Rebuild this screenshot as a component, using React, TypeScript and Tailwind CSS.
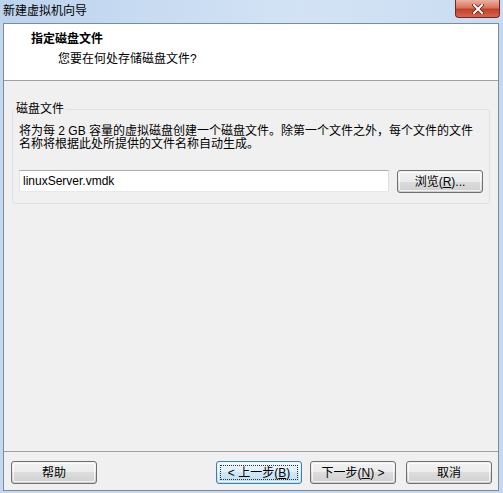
import React from 'react';

const ui = '"Liberation Sans", "Noto Sans CJK SC", sans-serif';

function WinButton({
  children,
  isDefault,
  className = '',
}: {
  children: React.ReactNode;
  isDefault?: boolean;
  className?: string;
}) {
  return (
    <button
      className={
        'relative h-[23px] w-[86px] rounded-[3px] border text-[12px] leading-[14px] text-black ' +
        (isDefault
          ? 'border-[#3c7fb1] bg-[linear-gradient(#eaf6fd_0%,#e0f1fb_50%,#cfe8f7_50%,#bddff3_100%)] '
          : 'border-[#707070] bg-[linear-gradient(#f2f2f2_0%,#ebebeb_50%,#dddddd_50%,#cfcfcf_100%)] ') +
        className
      }
      style={{ fontFamily: ui }}
    >
      <span className="absolute inset-[1px] rounded-[2px] border border-white/70" />
      {isDefault && <span className="absolute inset-[3px] border border-dotted border-[#333]" />}
      <span className="relative">{children}</span>
    </button>
  );
}

export default function App() {
  return (
    <div
      className="flex h-[493px] w-[503px] flex-col bg-[#c4d8ef] pb-[2px] pl-[3px] pr-[4px]"
      style={{ fontFamily: ui }}
    >
      {/* title bar */}
      <div className="relative -ml-[3px] -mr-[4px] flex h-[23px] items-center bg-[linear-gradient(90deg,#bcd3ee,#d3e3f5_60%,#c9dcf1)] pb-[2px] pl-[3px]">
        <span className="text-[12px] leading-[14px] text-black">新建虚拟机向导</span>
        <div className="absolute right-[3px] top-0 flex h-[18px] w-[45px] items-center justify-center rounded-b-[4px] border border-t-0 border-[#6e2a20] bg-[linear-gradient(#eab1a3_0%,#d9735c_45%,#c2412a_55%,#d8654d_100%)]">
          <svg width="12" height="10" viewBox="0 0 12 10">
            <path d="M2 1 L10 9 M10 1 L2 9" stroke="#5a1d14" strokeWidth="3.4" strokeLinecap="square" />
            <path d="M2 1 L10 9 M10 1 L2 9" stroke="#ffffff" strokeWidth="2" strokeLinecap="square" />
          </svg>
        </div>
      </div>

      {/* client area */}
      <div className="flex flex-1 flex-col border border-[#7d8c9c] bg-[#f0f0f0]">
        {/* header */}
        <div className="h-[57px] border-b border-[#a0a0a0] bg-white pl-[27px] pt-[8px]">
          <div className="text-[12px] font-bold leading-[14px] text-black">指定磁盘文件</div>
          <div className="mt-[6px] pl-[27px] text-[12px] leading-[14px] text-black">您要在何处存储磁盘文件?</div>
        </div>

        {/* disk file group */}
        <fieldset className="ml-[8px] mr-[8px] mt-[21px] rounded-[3px] border border-[#dce3e8] pb-[10px]">
          <legend className="ml-[1px] px-[2px] text-[12px] leading-[14px] text-black">磁盘文件</legend>
          <div className="px-[6px]">
            <div className="mt-[9px] whitespace-nowrap text-[12px] leading-[13px] text-black">
              将为每 2 GB 容量的虚拟磁盘创建一个磁盘文件。除第一个文件之外，每个文件的文件
            </div>
            <div className="whitespace-nowrap text-[12px] leading-[13px] text-black">
              名称将根据此处所提供的文件名称自动生成。
            </div>
            <div className="mt-[19px] flex items-start">
              <div className="flex h-[22px] w-[370px] items-center border border-[#abadb3] border-b-[#e3e9ef] border-l-[#e2e3ea] border-r-[#dbdfe6] bg-white pl-[3px] text-[12px] text-black">
                linuxServer.vmdk
              </div>
              <WinButton className="ml-[8px]">
                浏览(<u>R</u>)...
              </WinButton>
            </div>
          </div>
        </fieldset>

        <div className="flex-1" />

        {/* footer */}
        <div className="border-t border-[#a0a0a0] shadow-[inset_0_1px_0_#ffffff]" />
        <div className="mb-[6px] mt-[9px] flex pl-[7px] pr-[6px]">
          <WinButton>帮助</WinButton>
          <WinButton isDefault className="ml-auto">
            &lt; 上一步(<u>B</u>)
          </WinButton>
          <WinButton className="ml-[8px]">
            下一步(<u>N</u>) &gt;
          </WinButton>
          <WinButton className="ml-[10px]">取消</WinButton>
        </div>
      </div>
    </div>
  );
}
